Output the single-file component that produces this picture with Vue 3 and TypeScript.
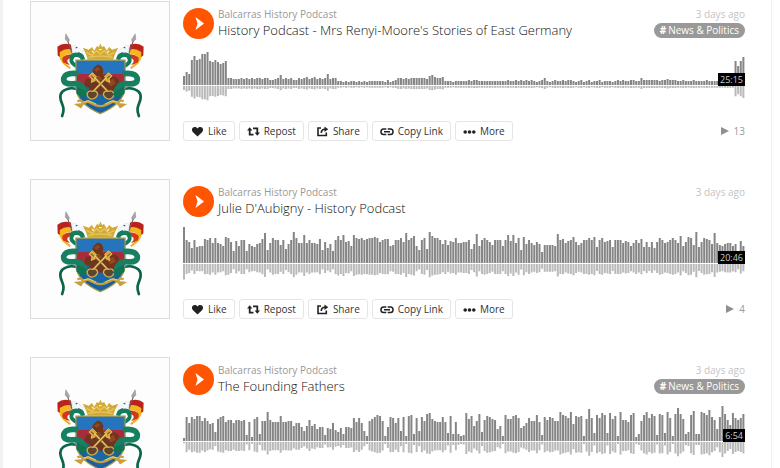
<script setup lang="ts">
interface Track {
  id: number
  title: string
  tag?: string
  duration: string
  plays?: number
  peaks: number[]
}

const ARTIST = 'Balcarras History Podcast'
const BAR_COUNT = 215
const STEP = 562 / BAR_COUNT
const BAR_WIDTH = 2
const BASELINE = 40

const tracks: Track[] = [
  {
    id: 1,
    title: "History Podcast - Mrs Renyi-Moore's Stories of East Germany",
    tag: 'News & Politics',
    duration: '25:15',
    plays: 13,
    peaks: [
      9, 13, 11, 25, 29, 25, 26, 31, 31, 33, 24, 23, 25, 23, 21, 22, 24, 7, 7, 6, 6, 6, 7, 6, 7, 6, 7, 6, 7, 7, 6, 7, 7, 5, 5, 6, 7, 10, 6, 7,
      6, 7, 5, 5, 7, 6, 7, 8, 6, 7, 8, 6, 7, 6, 7, 11, 6, 7, 7, 4, 4, 3, 4, 3, 4, 4, 3, 4, 3, 4, 3, 4, 4, 4,
      4, 4, 4, 3, 5, 3, 4, 5, 7, 7, 6, 7, 6, 7, 7, 7, 7, 7, 7, 6, 9, 10, 8, 7, 7, 8, 4, 4, 4, 3, 4, 4, 4, 4, 4, 5, 4,
      5, 5, 4, 4, 4, 4, 4, 4, 4, 4, 4, 4, 4, 5, 4, 4, 5, 4, 5, 4, 5, 4, 5, 4, 3, 4, 5, 7, 4, 3, 4, 5, 4, 4, 5, 4, 5,
      5, 4, 3, 4, 5, 3, 4, 5, 3, 4, 4, 5, 3, 4, 4, 4, 3, 4, 5, 4, 5, 4, 4, 5, 5, 4, 4, 7, 5, 5, 5, 5, 5, 5, 4, 5, 5, 6, 5, 5, 5,
      4, 4, 5, 4, 4, 4, 5, 4, 4, 4, 4, 5, 4, 4, 4, 4, 4, 4, 4, 5, 4, 4, 24, 19, 24, 28,
    ],
  },
  {
    id: 2,
    title: "Julie D'Aubigny - History Podcast",
    duration: '20:46',
    plays: 4,
    peaks: [
      36, 23, 21, 15, 23, 16, 17, 17, 24, 23, 25, 20, 25, 20, 19, 17, 26, 25, 21, 12, 22, 17, 23, 23, 12, 19, 17, 16, 19, 20, 24, 30, 13, 20, 25, 23, 23,
      18, 23, 14, 19, 23, 31, 25, 20, 20, 28, 20, 23, 20, 20, 19, 24, 13, 21, 15, 19, 12, 23, 27, 23, 28, 21, 22, 17, 28, 25, 24, 25, 23, 24, 25, 25, 26,
      25, 21, 23, 24, 24, 17, 18, 23, 23, 25, 21, 30, 23, 25, 27, 17, 13, 23, 25, 14, 31, 27, 25, 25, 23, 19, 23, 18, 22, 21, 25, 20, 20, 21, 21, 23, 14,
      19, 29, 17, 23, 25, 23, 21, 18, 23, 23, 23, 17, 23, 28, 22, 28, 20, 25, 13, 26, 19, 23, 20, 18, 21, 19, 11, 18, 18, 18, 18, 17, 29, 23, 24, 20, 22,
      23, 26, 21, 18, 20, 23, 23, 25, 23, 26, 16, 23, 25, 21, 22, 23, 16, 23, 23, 23, 20, 22, 21, 17, 20, 23, 20, 24, 16, 21, 16, 21, 15, 21, 25, 23, 20,
      21, 23, 25, 23, 20, 27, 17, 21, 26, 25, 18, 31, 16, 21, 25, 24, 23, 19, 30, 20, 18, 17, 19, 20, 20, 17, 19, 12, 22, 17,
    ],
  },
  {
    id: 3,
    title: 'The Founding Fathers',
    tag: 'News & Politics',
    duration: '6:54',
    peaks: [
      3, 24, 18, 24, 22, 25, 25, 20, 23, 20, 17, 18, 9, 22, 24, 25, 19, 21, 21, 18, 21, 21, 20, 21, 6, 19, 4, 22, 24, 7, 20, 20, 29, 21, 19, 19, 19,
      25, 19, 19, 20, 20, 15, 18, 18, 14, 10, 15, 21, 15, 17, 12, 14, 14, 6, 13, 12, 18, 11, 9, 13, 7, 14, 14, 13, 23, 19, 23, 18, 10, 5, 20, 22, 24,
      26, 25, 20, 5, 14, 24, 23, 18, 23, 10, 24, 5, 25, 26, 7, 23, 10, 24, 20, 27, 28, 22, 20, 19, 19, 24, 19, 8, 25, 7, 19, 7, 5, 6, 28, 22, 25,
      15, 20, 27, 9, 21, 25, 24, 22, 21, 12, 15, 5, 26, 22, 22, 25, 26, 23, 13, 15, 18, 23, 20, 20, 26, 19, 6, 24, 21, 24, 23, 20, 20, 29, 26, 25, 23,
      29, 17, 25, 24, 25, 5, 22, 32, 23, 8, 26, 23, 28, 26, 8, 28, 22, 25, 5, 29, 21, 21, 19, 26, 28, 4, 7, 20, 26, 29, 23, 27, 25, 6, 27, 26, 8,
      29, 23, 5, 27, 33, 27, 22, 7, 9, 26, 30, 7, 7, 29, 28, 26, 31, 24, 21, 12, 24, 35, 27, 21, 16, 28, 23, 21, 23, 27,
    ],
  },
]

const actions = ['Like', 'Repost', 'Share', 'Copy Link', 'More']

function bars(peaks: number[], base: number, scale: number): string {
  return peaks
    .slice(0, BAR_COUNT)
    .map((p, i) => `M${(i * STEP).toFixed(2)} ${base}v${(p * scale).toFixed(1)}h${BAR_WIDTH}V${base}z`)
    .join('')
}
</script>

<template>
  <div class="page">
    <main class="stream">
      <article v-for="track in tracks" :key="track.id" class="track">
        <a href="#" class="cover" :aria-label="track.title">
          <svg viewBox="-56 -70 408 408" aria-hidden="true">
            <g v-for="side in 2" :key="side" :transform="side === 2 ? 'translate(299 0) scale(-1 1)' : undefined">
              <path d="M22 62Q38 48 62 56L66 76Q46 70 33 84L36 98L23 88Z" fill="#b9231b" />
              <path d="M29 78Q48 64 65 71L66 86Q47 80 40 94L49 106L39 114L29 98Z" fill="#f6b71d" />
              <path d="M38 93Q51 82 67 87L62 96Q49 98 52 108L59 116L43 112Q33 103 38 93Z" fill="#cf3a1f" />
              <path d="M42 112L60 126" stroke="#ecae1f" stroke-width="6" />
              <path d="M52 43L65 80" stroke="#77585a" stroke-width="3" />
              <path d="M47 24L58 42L54 49L45 40Z" fill="#a5a5a8" stroke="#6e6e73" stroke-width="1" />
              <path d="M64 60L76 58L86 68L98 74L96 84L83 86L70 84Z" fill="#f4f8fb" stroke="#c3d2df" stroke-width="1" />
              <path d="M84 79L96 86M76 66L81 64" stroke="#33466a" stroke-width="3" />
              <path d="M62 93Q74 80 94 91L98 101" fill="none" stroke="#137f5c" stroke-width="13" />
              <path d="M68 92Q54 107 80 120" fill="none" stroke="#127b57" stroke-width="11" />
              <path d="M104 206Q92 184 62 185Q28 190 31 214C33 234 47 240 36 267" fill="none" stroke="#0c6548" stroke-width="8" stroke-linecap="round" />
            </g>
            <path d="M77 102H222V185Q217 231 149 260Q81 231 77 185Z" fill="#1a5e9d" />
            <path d="M79 104H220V144H79Z" fill="#2475bd" />
            <path d="M79 143H220V173L197 184H99L79 174Z" fill="#a82c3a" />
            <path d="M90 184H210L188 222L149 254L110 222Z" fill="#1a67a6" />
            <path d="M77 102H222V185Q217 231 149 260Q81 231 77 185Z" fill="none" stroke="#a19950" stroke-width="4" />
            <path d="M130 148L125 132L132 122L142 115L152 119L158 130L156 146L172 158L190 148L204 160L202 182L190 190L186 212L170 202L149 204L132 200L118 212L108 200L118 184L100 176L108 156L122 158Z" fill="#70351f" />
            <path d="M130 130L141 122L149 128L138 136ZM127 155L145 147L154 160L137 167ZM168 166L188 157L194 172L180 180Z" fill="#914820" />
            <g v-for="side in 2" :key="'side' + side" :transform="side === 2 ? 'translate(299 0) scale(-1 1)' : undefined">
              <path d="M84 142Q46 137 41 155Q38 174 68 172Q94 168 104 196" fill="none" stroke="#178061" stroke-width="17" />
              <path d="M78 188Q100 182 114 204L97 212L79 202Z" fill="#117552" />
              <path d="M128 150L172 196" stroke="#82642b" stroke-width="7" />
              <path d="M127 148L172 195" stroke="#efcd68" stroke-width="4" />
              <path d="M115 149L126 139L138 151L131 155L134 163L122 168L124 157Z" fill="#d7a83c" stroke="#f1d26e" stroke-width="2" />
              <path d="M121 148L130 156" stroke="#785526" stroke-width="3" />
              <path d="M174 194Q160 190 158 203Q162 216 177 217Q190 212 189 200Q184 190 174 194Z" fill="#5f452c" stroke="#d6ae4b" stroke-width="4" />
              <path d="M81 223L92 221L98 229L91 240L81 234L96 232L111 224L133 234Q143 238 150 238" fill="none" stroke="#c99f3c" stroke-width="7" />
              <path d="M98 226L115 222L137 232" fill="none" stroke="#ead171" stroke-width="3" />
            </g>
            <path d="M97 65L115 71L124 63L131 74L139 60L145 63L149 53L154 63L160 60L168 74L175 63L184 71L202 65L192 85L187 101H112L107 85Z" fill="#d3a936" />
            <path d="M114 94Q149 86 185 94M108 79L125 88L138 74L149 84L161 74L174 88L191 79" fill="none" stroke="#e5c65c" stroke-width="4" />
            <path d="M124 75L130 80M169 80L175 75M145 71H153" stroke="#fff4bd" stroke-width="4" />
          </svg>
        </a>

        <div class="body">
          <header class="head">
            <button type="button" class="play" :aria-label="'Play ' + track.title">
              <svg viewBox="0 0 31 31" aria-hidden="true"><path d="M12.500 9L21 15.500L12.500 22L14.500 15.500Z" fill="#fff" /></svg>
            </button>
            <div class="names">
              <a href="#" class="artist">{{ ARTIST }}</a>
              <a href="#" class="title">{{ track.title }}</a>
            </div>
            <div class="meta">
              <time class="ago">3 days ago</time>
              <a v-if="track.tag" href="#" class="tag"><span class="hash">#</span>{{ track.tag }}</a>
            </div>
          </header>

          <div class="wave">
            <svg viewBox="0 0 562 60" preserveAspectRatio="none" aria-hidden="true">
              <path :d="bars(track.peaks, BASELINE, -1)" fill="#858585" />
              <path :d="bars(track.peaks, BASELINE + 1, 0.43)" fill="#bababa" />
            </svg>
            <span class="duration">{{ track.duration }}</span>
          </div>

          <footer v-if="track.plays !== undefined" class="foot">
            <button v-for="action in actions" :key="action" type="button" class="action">
              <svg v-if="action === 'Like'" viewBox="0 0 13 11" class="icon" aria-hidden="true">
                <path d="M6.500 10.500L2 6.200C-.2 4 1.300 1 3.800 1C5.200 1 6 1.700 6.500 2.500C7 1.700 7.800 1 9.200 1C11.700 1 13.200 4 11 6.200Z" fill="#222" />
              </svg>
              <svg v-else-if="action === 'Repost'" viewBox="0 0 13 11" class="icon" aria-hidden="true">
                <path d="M2.700 3V8.700H6.500M6 2.300H10.300V8" fill="none" stroke="#222" stroke-width="1.800" />
                <path d="M0 4.600L2.700 1.200L5.400 4.600ZM7.600 6.400L10.300 9.800L13 6.400Z" fill="#222" />
              </svg>
              <svg v-else-if="action === 'Share'" viewBox="0 0 13 11" class="icon" aria-hidden="true">
                <path d="M5 2H2V9.500H10.300V6.500M5.300 7Q5.300 3.500 9 3.300" fill="none" stroke="#222" stroke-width="1.600" />
                <path d="M8.500 .5L12.200 3.200L8.500 5.900Z" fill="#222" />
              </svg>
              <svg v-else-if="action === 'Copy Link'" viewBox="0 0 14 11" class="icon link" aria-hidden="true">
                <path d="M6.300 3H3.500A2.500 2.700 0 0 0 3.500 8.500H6.300M7.700 3H10.500A2.500 2.700 0 0 1 10.500 8.500H7.700M4 5.800H10" fill="none" stroke="#222" stroke-width="1.500" />
              </svg>
              <svg v-else viewBox="0 0 13 11" class="icon" aria-hidden="true">
                <g fill="#222"><circle cx="2.200" cy="6" r="1.800" /><circle cx="6.500" cy="6" r="1.800" /><circle cx="10.800" cy="6" r="1.800" /></g>
              </svg>
              <span>{{ action }}</span>
            </button>
            <span class="plays">
              <svg viewBox="0 0 8 8" aria-hidden="true"><path d="M0 0L8 4L0 8Z" fill="#8f8f8f" /></svg>{{ track.plays }}
            </span>
          </footer>
        </div>
      </article>
    </main>
  </div>
</template>

<style>
body {
  margin: 0;
  background: #fff;
}
</style>

<style scoped>
.page {
  box-sizing: border-box;
  height: 100vh;
  overflow: hidden;
  padding-right: 8px;
  border-left: 3px solid #f2f2f2;
  font-family: "Open Sans", "Liberation Sans", sans-serif;
}
.stream {
  display: flex;
  flex-direction: column;
  gap: 38px;
  padding: 1px 26px 0 27px;
  border-right: 1px solid #f0f0f0;
}
a {
  color: inherit;
  text-decoration: none;
}
.track {
  display: grid;
  grid-template-columns: 140px minmax(0, 1fr);
  gap: 13px;
}
.cover {
  box-sizing: border-box;
  width: 140px;
  height: 140px;
  border: 1px solid #dcdcdc;
  background: #fdfdfd;
}
.cover svg {
  display: block;
  width: 100%;
  height: 100%;
}
.body {
  display: flex;
  flex-direction: column;
}
.head {
  display: flex;
  gap: 4px;
  padding-top: 6px;
}
.play {
  flex: none;
  width: 31px;
  height: 31px;
  margin-top: 1px;
  padding: 0;
  border: 0;
  border-radius: 50%;
  background: #f50;
}
.play svg {
  display: block;
}
.names {
  display: flex;
  flex: 1;
  flex-direction: column;
  min-width: 0;
}
.artist {
  font-size: 10px;
  line-height: 14px;
  color: #999;
}
.title {
  font-size: 13px;
  font-weight: 300;
  line-height: 18px;
  color: #111;
}
.meta {
  display: flex;
  flex-direction: column;
  align-items: flex-end;
  gap: 2px;
}
.ago {
  font-size: 10px;
  line-height: 14px;
  color: #c4c4c4;
}
.tag {
  display: flex;
  gap: 2px;
  padding: 0 6px;
  border-radius: 8px;
  background: #999;
  color: #fff;
  font-size: 10px;
  line-height: 15px;
}
.hash {
  font-weight: 700;
}
.wave {
  position: relative;
  margin-top: 6px;
}
.wave svg {
  display: block;
  width: 100%;
  height: 60px;
}
.duration {
  position: absolute;
  right: 0;
  top: 28px;
  padding: 0 2px;
  background: #000;
  color: #ccc;
  font-size: 9px;
  line-height: 13px;
}
.foot {
  display: flex;
  gap: 4px;
  margin-top: auto;
}
.action {
  display: flex;
  align-items: center;
  gap: 4px;
  height: 20px;
  padding: 0 7px;
  border: 1px solid #e5e5e5;
  border-radius: 3px;
  background: #fff;
  color: #333;
  font-family: inherit;
  font-size: 10px;
  line-height: 18px;
}
.icon {
  width: 13px;
  height: 11px;
}
.link {
  width: 14px;
}
.plays {
  display: flex;
  align-items: center;
  gap: 5px;
  margin-left: auto;
  color: #999;
  font-size: 10px;
  line-height: 20px;
}
.plays svg {
  width: 8px;
  height: 8px;
}
</style>
